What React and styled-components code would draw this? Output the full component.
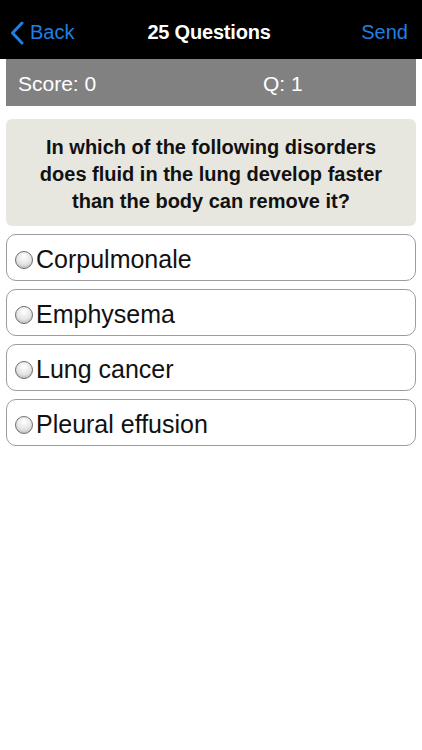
import styled, { createGlobalStyle } from "styled-components"

const GlobalStyle = createGlobalStyle`
  html, body {
    margin: 0;
    padding: 0;
    background: #fff;
  }
  body {
    font-family: "Liberation Sans", Arial, sans-serif;
  }
`

const Screen = styled.div`
  width: 422px;
  min-height: 750px;
  background: #fff;
`

const NavBar = styled.div`
  height: 59px;
  background: #000;
  display: grid;
  grid-template-columns: 1fr auto 1fr;
  align-items: center;
  padding: 6px 14px 0 10px;
  box-sizing: border-box;
`

const NavButton = styled.div`
  display: flex;
  align-items: center;
  gap: 6px;
  color: #1f7fe5;
  font-size: 20px;
  justify-self: ${({ $right }) => ($right ? "end" : "start")};
  cursor: pointer;
`

const Title = styled.div`
  color: #fff;
  font-size: 20px;
  font-weight: 600;
  letter-spacing: -0.2px;
`

const Body = styled.div`
  padding: 0 6px 0 6px;
  display: flex;
  flex-direction: column;
`

const ScoreBar = styled.div`
  height: 47px;
  background: #818181;
  display: grid;
  grid-template-columns: 245px 1fr;
  align-items: center;
  padding: 2px 0 0 12px;
  box-sizing: border-box;
  color: #fff;
  font-size: 21px;
`

const Question = styled.div`
  margin-top: 13px;
  background: #e7e7e0;
  border-radius: 6px;
  padding: 15px 30px 11px;
  text-align: center;
  font-weight: bold;
  font-size: 20px;
  line-height: 27px;
  color: #111;
`

const Options = styled.div`
  margin-top: 8px;
  display: flex;
  flex-direction: column;
  gap: 8px;
`

const Option = styled.div`
  height: 47px;
  box-sizing: border-box;
  border: 1px solid #9c9c9c;
  border-radius: 10px;
  display: flex;
  align-items: center;
  padding: 4px 0 0 8px;
  gap: 3px;
  font-size: 25px;
  color: #111;
  cursor: pointer;
`

const Radio = styled.span`
  width: 18px;
  height: 18px;
  border-radius: 50%;
  box-sizing: border-box;
  border: 1px solid #6f6f6f;
  background: radial-gradient(circle at 50% 30%, #ffffff 0%, #e4e4e4 55%, #a9a9a9 100%);
  flex-shrink: 0;
`

const ChevronLeft = () => (
  <svg width="14" height="24" viewBox="0 0 14 24" fill="none">
    <path d="M12 2 L2.5 12 L12 22" stroke="#1f7fe5" strokeWidth="3" strokeLinecap="round" strokeLinejoin="round" />
  </svg>
)

const answers = ["Corpulmonale", "Emphysema", "Lung cancer", "Pleural effusion"]

const App = () => {
  return (
    <Screen>
      <GlobalStyle />
      <NavBar>
        <NavButton>
          <ChevronLeft />
          Back
        </NavButton>
        <Title>25 Questions</Title>
        <NavButton $right>Send</NavButton>
      </NavBar>
      <Body>
        <ScoreBar>
          <span>Score: 0</span>
          <span>Q: 1</span>
        </ScoreBar>
        <Question>
          In which of the following disorders does fluid in the lung develop faster than the body can remove it?
        </Question>
        <Options>
          {answers.map((a) => (
            <Option key={a}>
              <Radio />
              {a}
            </Option>
          ))}
        </Options>
      </Body>
    </Screen>
  )
}

export default App
